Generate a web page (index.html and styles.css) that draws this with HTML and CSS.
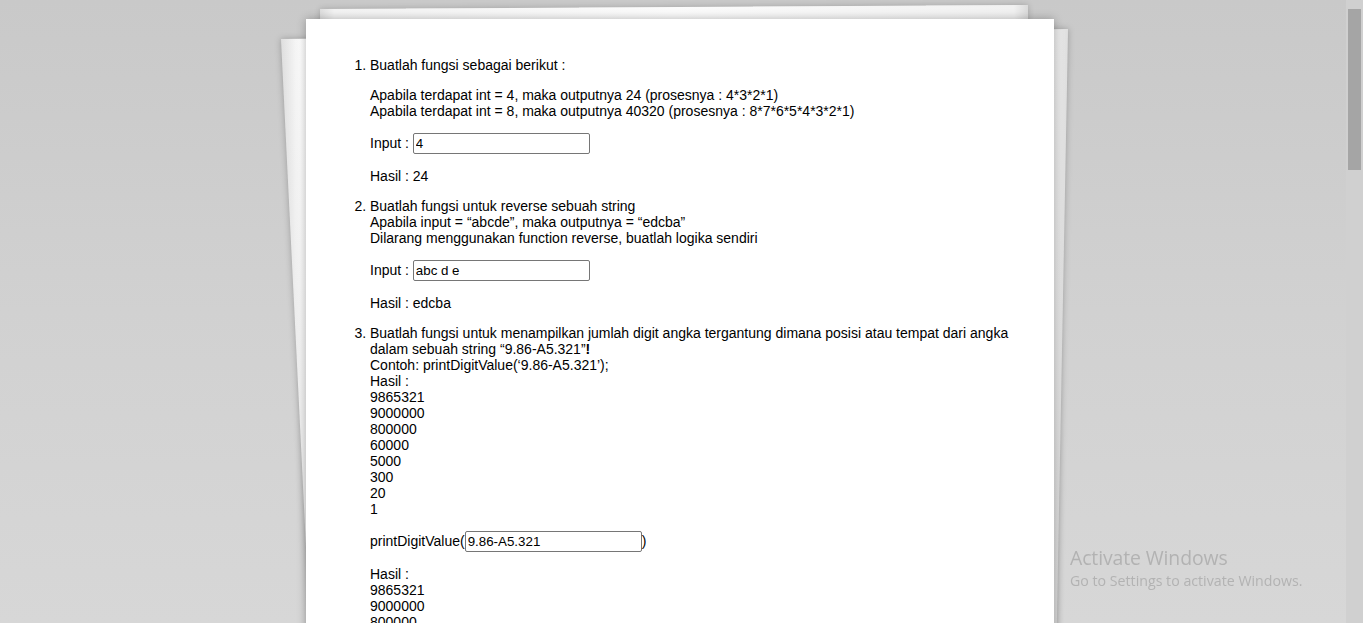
FILE: index.html
```html
<!DOCTYPE html>
<html lang="id">
<head>
<meta charset="utf-8">
<title>Soal</title>
<link rel="stylesheet" href="styles.css">
</head>
<body>
<div class="sheet-back-top"></div>
<div class="sheet-back-wrap"><div class="sheet-back"></div></div>
<main class="paper">
  <ol class="tasks">
    <li>Buatlah fungsi sebagai berikut :
      <p>Apabila terdapat int = 4, maka outputnya 24 (prosesnya : 4*3*2*1)<br>Apabila terdapat int = 8, maka outputnya 40320 (prosesnya : 8*7*6*5*4*3*2*1)</p>
      <p>Input : <input class="field" type="text" value="4"></p>
      <p>Hasil : 24</p>
    </li>
    <li>Buatlah fungsi untuk reverse sebuah string<br>Apabila input = “abcde”, maka outputnya = “edcba”<br>Dilarang menggunakan function reverse, buatlah logika sendiri
      <p>Input : <input class="field" type="text" value="abc d e"></p>
      <p>Hasil : edcba</p>
    </li>
    <li>Buatlah fungsi untuk menampilkan jumlah digit angka tergantung dimana posisi atau tempat dari angka dalam sebuah string “9.86-A5.321”<b class="bang">!</b><br>Contoh: printDigitValue(‘9.86-A5.321’);<br>Hasil :<br>9865321<br>9000000<br>800000<br>60000<br>5000<br>300<br>20<br>1
      <p>printDigitValue(<input class="field" type="text" value="9.86-A5.321">)</p>
      <p>Hasil :<br>9865321<br>9000000<br>800000<br>60000<br>5000<br>300<br>20<br>1</p>
    </li>
  </ol>
</main>
<div class="scrollbar"><div class="scrollbar-thumb"></div></div>
<div class="watermark">
  <div class="watermark-title">Activate Windows</div>
  <div class="watermark-sub">Go to Settings to activate Windows.</div>
</div>
</body>
</html>
```

FILE: styles.css
```css
html, body {
  margin: 0;
  padding: 0;
  height: 100%;
  overflow: hidden;
}

body {
  background: linear-gradient(to bottom, #c9c9c9 0%, #d1d1d1 50%, #d7d7d7 100%);
  font-family: "Liberation Sans", Arial, sans-serif;
  font-size: 14px;
  color: #000;
  position: relative;
}

.paper {
  position: relative;
  z-index: 2;
  width: 748px;
  box-sizing: border-box;
  margin: 19px 0 0 306px;
  padding: 24px 24px 40px 24px;
  background: #fff;
  box-shadow: 0 0 9px rgba(0, 0, 0, 0.28);
}

.tasks {
  margin: 14px 0;
  padding-left: 40px;
}

.tasks p {
  margin: 14px 0;
}

.bang {
  font-weight: bold;
}

.field {
  font-family: "Liberation Sans", Arial, sans-serif;
  font-size: 13.33px;
  width: 177px;
  height: 21px;
  box-sizing: border-box;
  margin: 0;
  padding: 1px 2px;
  border: 1px solid #767676;
  border-radius: 2px;
  color: #000;
  background: #fff;
  vertical-align: baseline;
}

/* background sheets */
.sheet-back-top {
  position: absolute;
  z-index: 0;
  left: 320px;
  top: 9px;
  width: 708px;
  height: 500px;
  background: linear-gradient(to right, #dedede 0, #f3f3f3 2%, #fbfbfb 50%, #f1f1f1 98%, #dadada 100%);
  transform: rotate(-0.33deg);
  transform-origin: 0 0;
  box-shadow: 0 0 6px rgba(0, 0, 0, 0.2);
}

.sheet-back-wrap {
  position: absolute;
  z-index: 1;
  left: 281px;
  top: 29px;
  width: 787px;
  height: 640px;
  filter: drop-shadow(0 0 3px rgba(0, 0, 0, 0.25));
}

.sheet-back {
  width: 100%;
  height: 100%;
  background:
    linear-gradient(to right, rgba(0,0,0,0.12) 0, rgba(0,0,0,0) 2.5%, rgba(0,0,0,0) 96.5%, rgba(0,0,0,0.12) 100%),
    linear-gradient(to bottom, #fdfdfd 0%, #f6f6f6 40%, #e6e6e6 100%);
  clip-path: polygon(0 10px, 100% 0, 775px 100%, 31px 100%);
}

/* fake scrollbar */
.scrollbar {
  position: fixed;
  top: 0;
  right: 0;
  width: 17px;
  height: 100%;
  background: #d0d0d0;
  z-index: 5;
}

.scrollbar-thumb {
  margin: 9px 0 0 2px;
  width: 13px;
  height: 161px;
  background: #a5a5a5;
}

/* watermark */
.watermark {
  position: fixed;
  left: 1070px;
  top: 546px;
  z-index: 6;
  color: rgba(150, 150, 150, 0.55);
  font-family: "Open Sans", "Noto Sans", sans-serif;
  white-space: nowrap;
}

.watermark-title {
  font-size: 19.4px;
  line-height: 24px;
  letter-spacing: -0.1px;
}

.watermark-sub {
  font-size: 14.2px;
  line-height: 20px;
  margin-top: 1px;
}
```
